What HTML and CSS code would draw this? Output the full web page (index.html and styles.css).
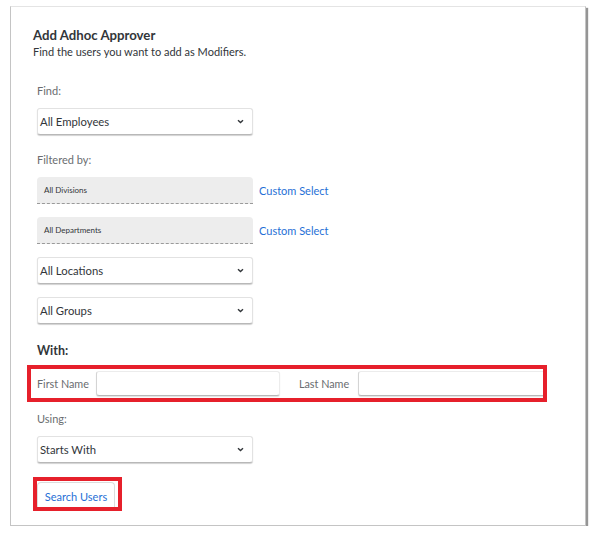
FILE: index.html
```html
<!DOCTYPE html>
<html>
<head>
<meta charset="utf-8">
<link rel="stylesheet" href="styles.css">
</head>
<body>
<div class="card">
  <h1 class="title">Add Adhoc Approver</h1>
  <p class="subtitle">Find the users you want to add as Modifiers.</p>
  <div class="form">
    <div class="label lbl-find">Find:</div>
    <div class="select">
      <span>All Employees</span>
      <svg class="chev" width="7" height="5" viewBox="0 0 7 5"><path d="M1 1.2 L3.5 3.6 L6 1.2" fill="none" stroke="#32363a" stroke-width="1.4"/></svg>
    </div>
    <div class="label lbl-filter">Filtered by:</div>
    <div class="custom-row">
      <div class="readonly">All Divisions</div>
      <a class="link">Custom Select</a>
    </div>
    <div class="custom-row">
      <div class="readonly">All Departments</div>
      <a class="link">Custom Select</a>
    </div>
    <div class="select gap">
      <span>All Locations</span>
      <svg class="chev" width="7" height="5" viewBox="0 0 7 5"><path d="M1 1.2 L3.5 3.6 L6 1.2" fill="none" stroke="#32363a" stroke-width="1.4"/></svg>
    </div>
    <div class="select gap">
      <span>All Groups</span>
      <svg class="chev" width="7" height="5" viewBox="0 0 7 5"><path d="M1 1.2 L3.5 3.6 L6 1.2" fill="none" stroke="#32363a" stroke-width="1.4"/></svg>
    </div>
    <div class="with">With:</div>
    <div class="highlight name-row">
      <span class="name-label">First Name</span>
      <div class="input first"></div>
      <span class="name-label last-label">Last Name</span>
      <div class="input last"></div>
    </div>
    <div class="label lbl-using">Using:</div>
    <div class="select">
      <span>Starts With</span>
      <svg class="chev" width="7" height="5" viewBox="0 0 7 5"><path d="M1 1.2 L3.5 3.6 L6 1.2" fill="none" stroke="#32363a" stroke-width="1.4"/></svg>
    </div>
    <div class="highlight btn-wrap">
      <button class="btn">Search Users</button>
    </div>
  </div>
</div>
</body>
</html>
```

FILE: styles.css
```css
html, body {
  margin: 0;
  padding: 0;
  background: #ffffff;
}
body {
  font-family: Lato, "Noto Sans", "Liberation Sans", sans-serif;
  color: #32363a;
}
.card {
  box-sizing: border-box;
  margin: 6px 0 0 10px;
  width: 576px;
  height: 520px;
  border: 1px solid #c4c4c4;
  border-top-color: #e4e4e4;
  box-shadow: 2px 2px 1px #959595;
  padding: 20px 0 0 22px;
  background: #fff;
}
.title {
  margin: 0;
  font-size: 13.2px;
  font-weight: 700;
  line-height: 16px;
  color: #32363a;
}
.subtitle {
  margin: 1px 0 0 0;
  font-size: 11px;
  line-height: 16px;
  color: #32363a;
}
.form {
  padding-left: 4px;
  display: flex;
  flex-direction: column;
  align-items: flex-start;
}
.label {
  font-size: 11px;
  line-height: 16px;
  color: #6a6d70;
}
.lbl-find { margin-top: 23px; }
.lbl-filter { margin-top: 17px; }
.lbl-using { margin-top: 9px; }
.select {
  box-sizing: border-box;
  margin-top: 9px;
  width: 216px;
  height: 27px;
  border: 1px solid #e2e2e2;
  border-bottom-color: #b8b8b8;
  border-radius: 3px;
  box-shadow: 0 1px 1px rgba(0,0,0,0.18);
  display: flex;
  align-items: center;
  justify-content: space-between;
  padding: 0 8px 0 2px;
  font-size: 11.3px;
  color: #32363a;
  background: #fff;
}
.select.gap { margin-top: 13px; }
.chev { display: block; }
.custom-row {
  display: flex;
  align-items: center;
  margin-top: 9px;
}
.custom-row + .custom-row { margin-top: 13px; }
.readonly {
  box-sizing: border-box;
  width: 216px;
  height: 27px;
  background: #ededed;
  border-bottom: 1px dashed #9a9a9a;
  border-radius: 4px 4px 0 0;
  display: flex;
  align-items: center;
  padding-left: 7px;
  font-size: 8px;
  color: #32363a;
}
.link {
  margin-left: 6px;
  font-size: 11px;
  color: #1f6fd6;
  margin-top: -1px;
}
.with {
  margin-top: 19px;
  font-size: 12.5px;
  font-weight: 700;
  line-height: 16px;
  color: #32363a;
}
.highlight {
  box-sizing: border-box;
  border: 4px solid #e6202b;
}
.name-row {
  margin-top: 6px;
  margin-left: -10px;
  width: 520px;
  height: 37px;
  display: flex;
  align-items: center;
  padding-left: 6px;
  overflow: hidden;
}
.name-label {
  font-size: 10.8px;
  color: #6a6d70;
  white-space: nowrap;
}
.input {
  box-sizing: border-box;
  height: 25px;
  background: #fff;
  border: 1px solid #ececec;
  border-left-color: #d4d4d4;
  border-bottom: 1px solid #b8b8b8;
  border-radius: 3px;
  box-shadow: 0 1px 1px rgba(0,0,0,0.12);
}
.input.first {
  margin-left: 7px;
  width: 184px;
}
.last-label {
  margin-left: 19px;
}
.input.last {
  margin-left: 9px;
  flex: 1;
  margin-right: -3px;
}
.btn-wrap {
  margin-top: 14px;
  margin-left: -4px;
  width: 89px;
  height: 34px;
  display: flex;
  align-items: flex-end;
  padding-left: 0;
  overflow: hidden;
}
.btn {
  box-sizing: border-box;
  margin: 0;
  width: 78px;
  height: 25px;
  background: #fff;
  border: 1px solid #dcdcdc;
  border-bottom: none;
  border-radius: 4px 4px 0 0;
  font-family: Lato, "Noto Sans", "Liberation Sans", sans-serif;
  font-size: 11px;
  color: #1f6fd6;
  padding: 0;
  padding-top: 2px;
}
```
